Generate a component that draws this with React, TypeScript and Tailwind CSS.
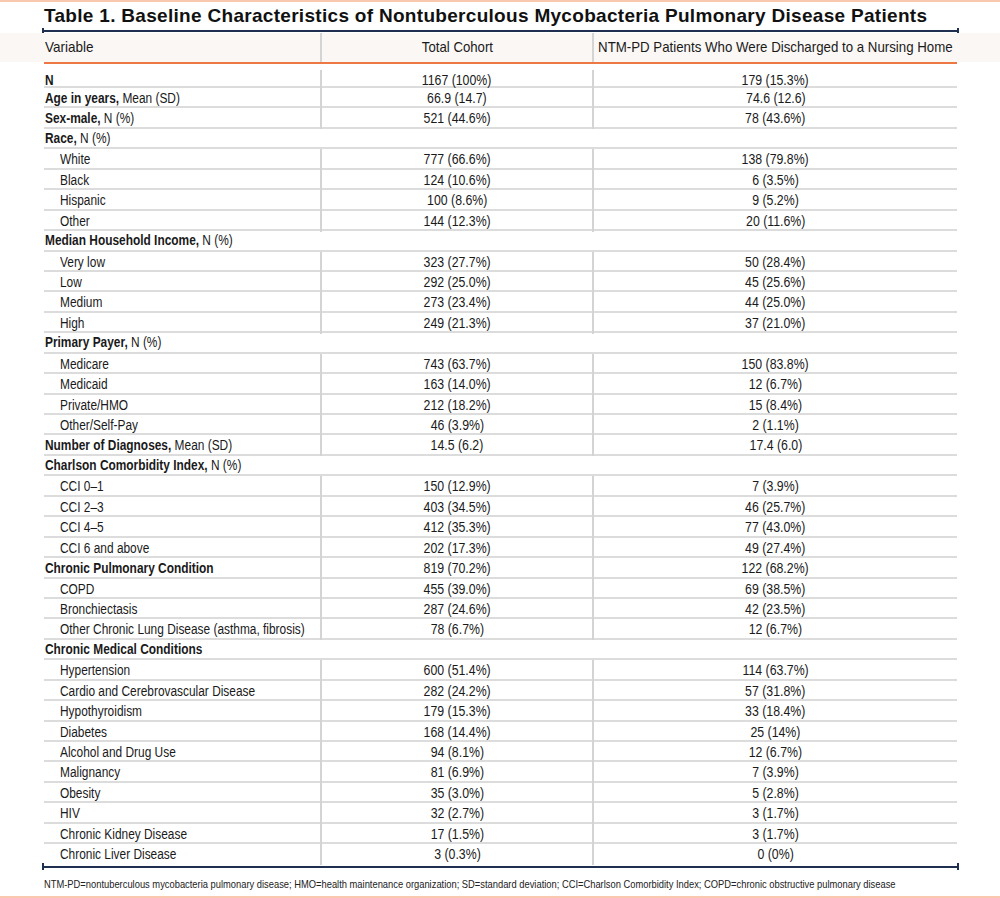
import React from "react";

type Row =
  | { kind: "section"; bold: string; rest?: string }
  | { kind: "data"; bold?: string; rest?: string; label?: string; indent?: boolean; a: string; b: string };

const rows: Row[] = [
  { kind: "data", bold: "N", a: "1167 (100%)", b: "179 (15.3%)" },
  { kind: "data", bold: "Age in years,", rest: " Mean (SD)", a: "66.9 (14.7)", b: "74.6 (12.6)" },
  { kind: "data", bold: "Sex-male,", rest: " N (%)", a: "521 (44.6%)", b: "78 (43.6%)" },
  { kind: "section", bold: "Race,", rest: " N (%)" },
  { kind: "data", label: "White", indent: true, a: "777 (66.6%)", b: "138 (79.8%)" },
  { kind: "data", label: "Black", indent: true, a: "124 (10.6%)", b: "6 (3.5%)" },
  { kind: "data", label: "Hispanic", indent: true, a: "100 (8.6%)", b: "9 (5.2%)" },
  { kind: "data", label: "Other", indent: true, a: "144 (12.3%)", b: "20 (11.6%)" },
  { kind: "section", bold: "Median Household Income,", rest: " N (%)" },
  { kind: "data", label: "Very low", indent: true, a: "323 (27.7%)", b: "50 (28.4%)" },
  { kind: "data", label: "Low", indent: true, a: "292 (25.0%)", b: "45 (25.6%)" },
  { kind: "data", label: "Medium", indent: true, a: "273 (23.4%)", b: "44 (25.0%)" },
  { kind: "data", label: "High", indent: true, a: "249 (21.3%)", b: "37 (21.0%)" },
  { kind: "section", bold: "Primary Payer,", rest: " N (%)" },
  { kind: "data", label: "Medicare", indent: true, a: "743 (63.7%)", b: "150 (83.8%)" },
  { kind: "data", label: "Medicaid", indent: true, a: "163 (14.0%)", b: "12 (6.7%)" },
  { kind: "data", label: "Private/HMO", indent: true, a: "212 (18.2%)", b: "15 (8.4%)" },
  { kind: "data", label: "Other/Self-Pay", indent: true, a: "46 (3.9%)", b: "2 (1.1%)" },
  { kind: "data", bold: "Number of Diagnoses,", rest: " Mean (SD)", a: "14.5 (6.2)", b: "17.4 (6.0)" },
  { kind: "section", bold: "Charlson Comorbidity Index,", rest: " N (%)" },
  { kind: "data", label: "CCI 0–1", indent: true, a: "150 (12.9%)", b: "7 (3.9%)" },
  { kind: "data", label: "CCI 2–3", indent: true, a: "403 (34.5%)", b: "46 (25.7%)" },
  { kind: "data", label: "CCI 4–5", indent: true, a: "412 (35.3%)", b: "77 (43.0%)" },
  { kind: "data", label: "CCI 6 and above", indent: true, a: "202 (17.3%)", b: "49 (27.4%)" },
  { kind: "data", bold: "Chronic Pulmonary Condition", a: "819 (70.2%)", b: "122 (68.2%)" },
  { kind: "data", label: "COPD", indent: true, a: "455 (39.0%)", b: "69 (38.5%)" },
  { kind: "data", label: "Bronchiectasis", indent: true, a: "287 (24.6%)", b: "42 (23.5%)" },
  { kind: "data", label: "Other Chronic Lung Disease (asthma, fibrosis)", indent: true, a: "78 (6.7%)", b: "12 (6.7%)" },
  { kind: "section", bold: "Chronic Medical Conditions" },
  { kind: "data", label: "Hypertension", indent: true, a: "600 (51.4%)", b: "114 (63.7%)" },
  { kind: "data", label: "Cardio and Cerebrovascular Disease", indent: true, a: "282 (24.2%)", b: "57 (31.8%)" },
  { kind: "data", label: "Hypothyroidism", indent: true, a: "179 (15.3%)", b: "33 (18.4%)" },
  { kind: "data", label: "Diabetes", indent: true, a: "168 (14.4%)", b: "25 (14%)" },
  { kind: "data", label: "Alcohol and Drug Use", indent: true, a: "94 (8.1%)", b: "12 (6.7%)" },
  { kind: "data", label: "Malignancy", indent: true, a: "81 (6.9%)", b: "7 (3.9%)" },
  { kind: "data", label: "Obesity", indent: true, a: "35 (3.0%)", b: "5 (2.8%)" },
  { kind: "data", label: "HIV", indent: true, a: "32 (2.7%)", b: "3 (1.7%)" },
  { kind: "data", label: "Chronic Kidney Disease", indent: true, a: "17 (1.5%)", b: "3 (1.7%)" },
  { kind: "data", label: "Chronic Liver Disease", indent: true, a: "3 (0.3%)", b: "0 (0%)" },
];

const sq = "inline-block whitespace-pre scale-x-[0.85] origin-left";
const sqc = "inline-block whitespace-nowrap scale-x-[0.88] origin-center";

function NavyRule() {
  return (
    <div className="flex items-center h-[4px] ml-[42px] w-[917px]">
      <div className="w-[2px] h-[7px] bg-[#1f2f50]" />
      <div className="flex-1 h-[2px] bg-[#1f2f50]" />
      <div className="w-[2px] h-[7px] bg-[#1f2f50]" />
    </div>
  );
}

export default function App() {
  return (
    <div className="w-[1000px] h-[898px] bg-white flex flex-col text-[#1a1a1a] font-['Liberation_Sans',Arial,sans-serif] overflow-hidden">
      <div className="h-[2px] bg-[#f9c8ae]" />
      <div className="h-[27px] pl-[44px] leading-[27px] text-[19px] tracking-[0.3px] font-bold text-[#111] whitespace-nowrap">
        Table 1. Baseline Characteristics of Nontuberculous Mycobacteria Pulmonary Disease Patients
      </div>
      <NavyRule />
      <div className="h-[29px] bg-[#fbf7f5]">
        <div className="ml-[44px] w-[913px] h-full grid grid-cols-[276px_272px_365px] text-[15px]">
          <div className="flex items-center pl-[1px]">
            <span className="inline-block whitespace-nowrap scale-x-[0.9] origin-left">Variable</span>
          </div>
          <div className="flex items-center justify-center border-l-2 border-[#d4d4d4]">
            <span className="inline-block whitespace-nowrap scale-x-[0.88] origin-center">Total Cohort</span>
          </div>
          <div className="flex items-center justify-center border-l-2 border-[#d4d4d4]">
            <span className="inline-block whitespace-nowrap scale-x-[0.885] origin-center">
              NTM-PD Patients Who Were Discharged to a Nursing Home
            </span>
          </div>
        </div>
      </div>
      <div className="ml-[44px] w-[913px] h-[2px] bg-[#ee7843]" />
      <div className="ml-[44px] w-[913px] flex flex-col text-[14px]">
        {rows.map((r, i) => {
          const last = i === rows.length - 1;
          const h = i === 0 ? "h-[24px] pt-[6px]" : "h-[20.45px]";
          const bb = last ? "" : "border-b-2 border-[#dcdcdc]";
          if (r.kind === "section") {
            return (
              <div key={i} className={`${h} ${bb} flex items-center pl-[1px]`}>
                <span className={sq}>
                  <span className="font-bold">{r.bold}</span>
                  {r.rest}
                </span>
              </div>
            );
          }
          return (
            <div key={i} className={`${h} ${bb} grid grid-cols-[276px_272px_365px]`}>
              <div className={`flex items-center ${r.indent ? "pl-[16px]" : "pl-[1px]"}`}>
                <span className={sq}>
                  {r.bold && <span className="font-bold">{r.bold}</span>}
                  {r.rest}
                  {r.label}
                </span>
              </div>
              <div className="flex items-center justify-center border-l-2 border-[#d4d4d4]">
                <span className={sqc}>{r.a}</span>
              </div>
              <div className="flex items-center justify-center border-l-2 border-[#d4d4d4]">
                <span className={sqc}>{r.b}</span>
              </div>
            </div>
          );
        })}
      </div>
      <NavyRule />
      <div className="h-[27px] pl-[44px] pt-[2px] leading-[27px] text-[11px] text-[#222]">
        <span className="inline-block whitespace-nowrap scale-x-[0.85] origin-left">
          NTM-PD=nontuberculous mycobacteria pulmonary disease; HMO=health maintenance organization; SD=standard deviation; CCI=Charlson Comorbidity Index; COPD=chronic obstructive pulmonary disease
        </span>
      </div>
      <div className="h-[2px] bg-[#f9c8ae]" />
    </div>
  );
}
